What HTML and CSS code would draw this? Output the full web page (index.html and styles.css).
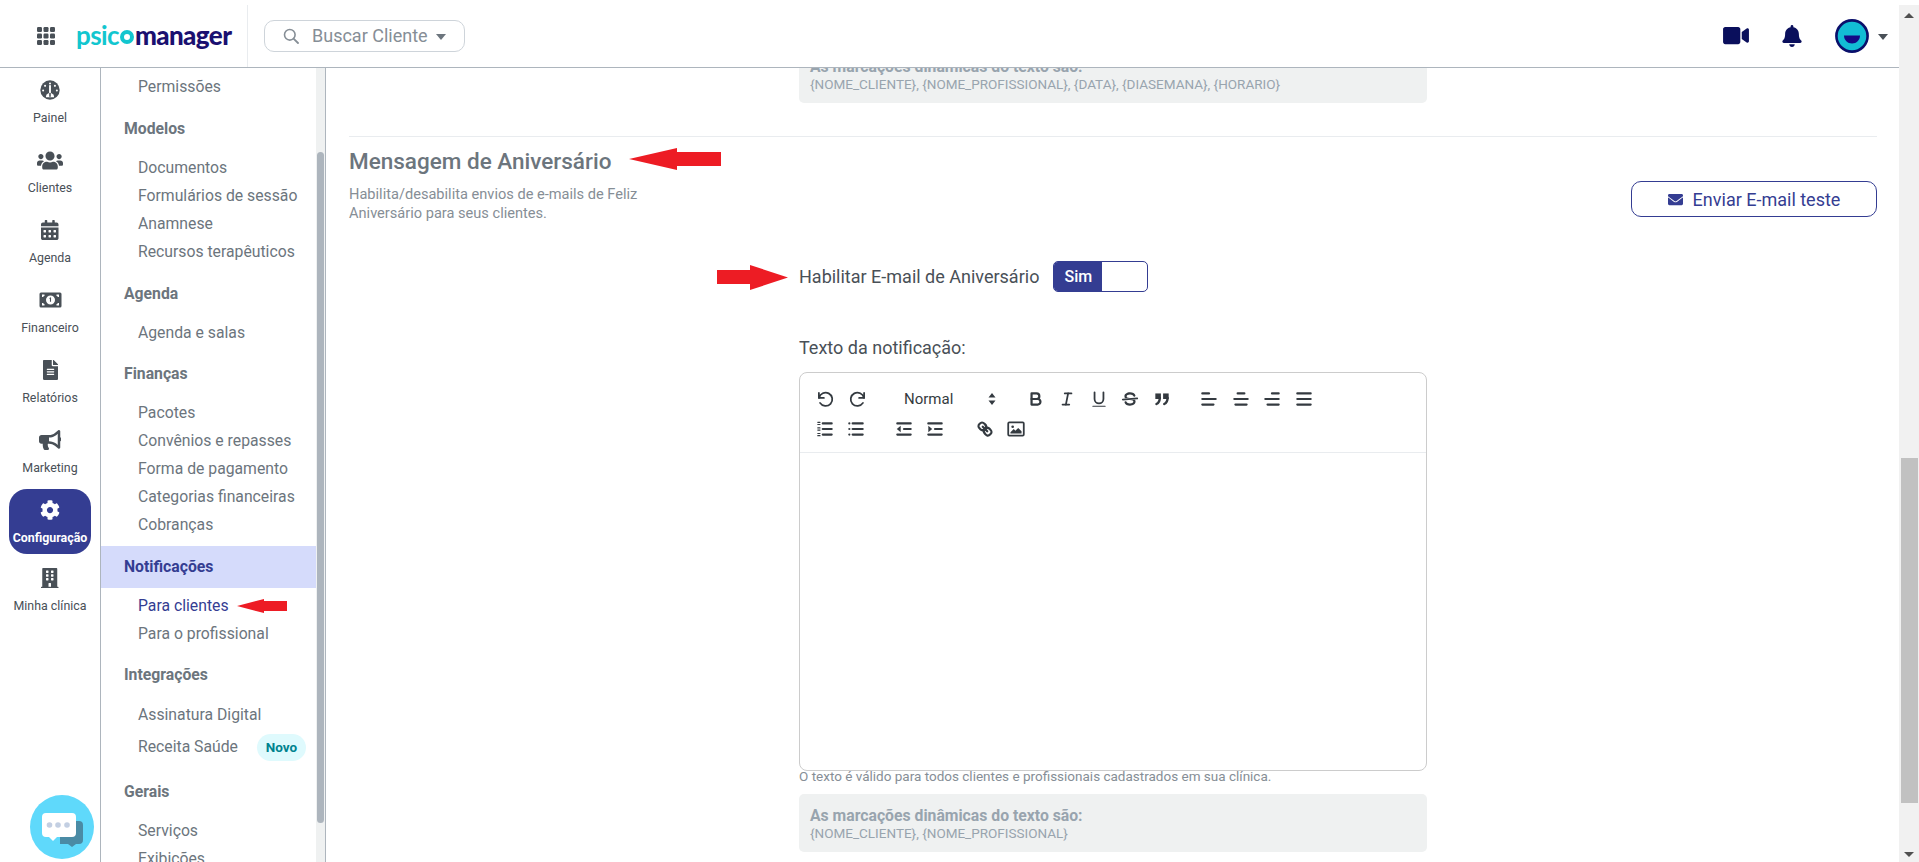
FILE: index.html
```html
<!DOCTYPE html>
<html lang="pt-BR">
<head>
<meta charset="utf-8">
<title>Psicomanager</title>
<link rel="stylesheet" href="styles.css">
</head>
<body>
<div class="page">
  <header class="topbar">
    <div class="brand">
      <svg class="grid-icon" viewBox="0 0 18 18"><g fill="#495057"><rect x="0" y="0" width="5" height="5" rx="1.2"/><rect x="6.5" y="0" width="5" height="5" rx="1.2"/><rect x="13" y="0" width="5" height="5" rx="1.2"/><rect x="0" y="6.5" width="5" height="5" rx="1.2"/><rect x="6.5" y="6.5" width="5" height="5" rx="1.2"/><rect x="13" y="6.5" width="5" height="5" rx="1.2"/><rect x="0" y="13" width="5" height="5" rx="1.2"/><rect x="6.5" y="13" width="5" height="5" rx="1.2"/><rect x="13" y="13" width="5" height="5" rx="1.2"/></g></svg>
      <div class="logo"><span class="logo-a">psic</span><span class="logo-o"></span><span class="logo-b">manager</span></div>
    </div>
    <div class="search">
      <svg class="search-icon" viewBox="0 0 16 16"><circle cx="6.8" cy="6.8" r="5.3" fill="none" stroke="#868e96" stroke-width="1.6"/><line x1="10.8" y1="10.8" x2="15" y2="15" stroke="#868e96" stroke-width="1.8" stroke-linecap="round"/></svg>
      <span class="search-text">Buscar Cliente</span>
      <span class="caret"></span>
    </div>
    <div class="top-actions">
      <svg class="ic-video" viewBox="0 0 576 512"><path fill="#0a0f5c" d="M336.2 64H47.8C21.4 64 0 85.4 0 111.8v288.4C0 426.6 21.4 448 47.8 448h288.4c26.4 0 47.8-21.4 47.8-47.8V111.8c0-26.4-21.4-47.8-47.8-47.8zm189.4 37.7L416 177.3v157.4l109.6 75.5c21.2 14.6 50.4-.3 50.4-25.8V127.5c0-25.4-29.1-40.4-50.4-25.8z"/></svg>
      <svg class="ic-bell" viewBox="0 0 448 512"><path fill="#0a0f5c" d="M224 512c35.32 0 63.97-28.65 63.97-64H160.03c0 35.35 28.65 64 63.97 64zm215.39-149.71c-19.32-20.76-55.47-51.99-55.47-154.29 0-77.7-54.48-139.9-127.94-155.16V32c0-17.67-14.32-32-31.98-32s-31.98 14.33-31.98 32v20.84C118.56 68.1 64.08 130.3 64.08 208c0 102.3-36.15 133.53-55.47 154.29-6 6.45-8.66 14.16-8.61 21.71.11 16.4 12.98 32 32.1 32h383.8c19.12 0 32-15.6 32.1-32 .05-7.55-2.61-15.27-8.61-21.71z"/></svg>
      <svg class="ic-avatar" viewBox="0 0 34 34"><circle cx="17" cy="17" r="15.6" fill="#12bcd4" stroke="#0a0f6b" stroke-width="2.6"/><path fill="#140a85" d="M9 16.5h16c0 4.6-3.6 8-8 8s-8-3.4-8-8z"/></svg>
      <span class="caret caret-dark"></span>
    </div>
  </header>

  <div class="body">
    <nav class="rail">
      <a class="rail-item">
        <span class="rail-icon"><svg class="i20" viewBox="0 0 512 512"><circle cx="256" cy="256" r="248" fill="#495057"/><g fill="#fff"><circle cx="256" cy="90" r="26"/><circle cx="130" cy="150" r="26"/><circle cx="382" cy="150" r="26"/><circle cx="80" cy="270" r="26"/><circle cx="432" cy="270" r="26"/><rect x="232" y="130" width="48" height="220" rx="20"/><path d="M150 440a106 106 0 0 1 212 0z"/></g><rect x="236" y="330" width="40" height="100" fill="#495057"/></svg></span>
        <span class="rail-label">Painel</span>
      </a>
      <a class="rail-item">
        <span class="rail-icon"><svg class="i26" viewBox="0 0 640 512"><path fill="#495057" d="M96 224c35.3 0 64-28.7 64-64s-28.7-64-64-64-64 28.7-64 64 28.7 64 64 64zm448 0c35.3 0 64-28.7 64-64s-28.7-64-64-64-64 28.7-64 64 28.7 64 64 64zm32 32h-64c-17.6 0-33.5 7.1-45.1 18.6 40.3 22.1 68.9 62 75.1 109.4h66c17.7 0 32-14.3 32-32v-32c0-35.3-28.7-64-64-64zm-256 0c61.9 0 112-50.1 112-112S381.9 32 320 32 208 82.1 208 144s50.1 112 112 112zm76.8 32h-8.3c-20.8 10-43.9 16-68.5 16s-47.6-6-68.5-16h-8.3C179.6 288 128 339.6 128 403.2V432c0 26.5 21.5 48 48 48h288c26.5 0 48-21.5 48-48v-28.8c0-63.6-51.6-115.2-115.2-115.2zm-223.7-13.4C161.5 263.1 145.6 256 128 256H64c-35.3 0-64 28.7-64 64v32c0 17.7 14.3 32 32 32h65.9c6.3-47.4 34.9-87.3 75.2-109.4z"/></svg></span>
        <span class="rail-label">Clientes</span>
      </a>
      <a class="rail-item">
        <span class="rail-icon"><svg class="i20" viewBox="0 0 448 512"><path fill="#495057" d="M0 464c0 26.5 21.5 48 48 48h352c26.5 0 48-21.5 48-48V192H0v272zm320-196c0-6.6 5.4-12 12-12h40c6.6 0 12 5.4 12 12v40c0 6.6-5.4 12-12 12h-40c-6.6 0-12-5.4-12-12v-40zm0 128c0-6.6 5.4-12 12-12h40c6.6 0 12 5.4 12 12v40c0 6.6-5.4 12-12 12h-40c-6.6 0-12-5.4-12-12v-40zM192 268c0-6.6 5.4-12 12-12h40c6.6 0 12 5.4 12 12v40c0 6.6-5.4 12-12 12h-40c-6.6 0-12-5.4-12-12v-40zm0 128c0-6.6 5.4-12 12-12h40c6.6 0 12 5.4 12 12v40c0 6.6-5.4 12-12 12h-40c-6.6 0-12-5.4-12-12v-40zM64 268c0-6.6 5.4-12 12-12h40c6.6 0 12 5.4 12 12v40c0 6.6-5.4 12-12 12H76c-6.6 0-12-5.4-12-12v-40zm0 128c0-6.6 5.4-12 12-12h40c6.6 0 12 5.4 12 12v40c0 6.6-5.4 12-12 12H76c-6.6 0-12-5.4-12-12v-40zM400 64h-48V16c0-8.8-7.2-16-16-16h-32c-8.8 0-16 7.2-16 16v48H160V16c0-8.8-7.2-16-16-16h-32c-8.8 0-16 7.2-16 16v48H48C21.5 64 0 85.5 0 112v48h448v-48c0-26.5-21.5-48-48-48z"/></svg></span>
        <span class="rail-label">Agenda</span>
      </a>
      <a class="rail-item">
        <span class="rail-icon"><svg class="i23" viewBox="0 0 46 32"><path fill="#495057" fill-rule="evenodd" d="M4 1h38a3 3 0 0 1 3 3v24a3 3 0 0 1-3 3H4a3 3 0 0 1-3-3V4a3 3 0 0 1 3-3zm19 6a9 9 0 1 0 0 18 9 9 0 0 0 0-18zM6 5v5h3V8h2V5zm29 0v3h2v2h3V5zM6 22v5h5v-3H9v-2zm31 0v2h-2v3h5v-5z"/><path fill="#495057" d="M21.5 11.5l2.6-.8v9h-2.2v-6l-1.4.4z"/></svg></span>
        <span class="rail-label">Financeiro</span>
      </a>
      <a class="rail-item">
        <span class="rail-icon"><svg class="i20" viewBox="0 0 384 512"><path fill="#495057" d="M224 136V0H24C10.7 0 0 10.7 0 24v464c0 13.3 10.7 24 24 24h336c13.3 0 24-10.7 24-24V160H248c-13.2 0-24-10.8-24-24zm64 236c0 6.6-5.4 12-12 12H108c-6.6 0-12-5.4-12-12v-8c0-6.6 5.4-12 12-12h168c6.6 0 12 5.4 12 12v8zm0-64c0 6.6-5.4 12-12 12H108c-6.6 0-12-5.4-12-12v-8c0-6.6 5.4-12 12-12h168c6.6 0 12 5.4 12 12v8zm0-72v8c0 6.6-5.4 12-12 12H108c-6.6 0-12-5.4-12-12v-8c0-6.6 5.4-12 12-12h168c6.6 0 12 5.4 12 12zm96-114.1v6.1H256V0h6.1c6.4 0 12.5 2.5 17 7l97.9 98c4.5 4.5 7 10.6 7 16.9z"/></svg></span>
        <span class="rail-label">Relatórios</span>
      </a>
      <a class="rail-item">
        <span class="rail-icon"><svg class="i20" viewBox="0 0 576 512"><path fill="#495057" d="M576 240c0-23.63-12.95-44.04-32-55.12V32.01C544 23.26 537.02 0 512 0c-7.12 0-14.19 2.38-19.98 7.02l-85.03 68.03C364.28 109.19 310.66 128 256 128H64c-35.35 0-64 28.65-64 64v96c0 35.35 28.65 64 64 64h33.7c-1.39 10.48-2.18 21.14-2.18 32 0 39.77 9.26 77.35 25.56 110.94 5.19 10.69 16.52 17.06 28.4 17.06h74.28c26.05 0 41.69-29.84 25.9-50.56-16.4-21.52-26.15-48.36-26.15-77.44 0-11.11 1.62-21.79 4.41-32H256c54.66 0 108.28 18.81 150.98 52.95l85.03 68.03a32.023 32.023 0 0 0 19.98 7.02c24.92 0 32-22.78 32-32V295.13C563.05 284.04 576 263.63 576 240zm-96 141.42l-33.05-26.44C392.95 311.78 325.12 288 256 288v-96c69.12 0 136.95-23.78 190.95-66.98L480 98.58v282.84z"/></svg></span>
        <span class="rail-label">Marketing</span>
      </a>
      <a class="rail-item active">
        <span class="rail-icon"><svg class="i20" viewBox="0 0 512 512"><path fill="#fff" d="M487.4 315.7l-42.6-24.6c4.3-23.2 4.3-47 0-70.2l42.6-24.6c4.9-2.8 7.1-8.6 5.5-14-11.1-35.6-30-67.8-54.7-94.6-3.8-4.1-10-5.1-14.8-2.3L380.8 110c-17.9-15.4-38.5-27.3-60.8-35.1V25.8c0-5.6-3.9-10.5-9.4-11.7-36.7-8.2-74.3-7.8-109.2 0-5.5 1.2-9.4 6.1-9.4 11.7V75c-22.2 7.9-42.8 19.8-60.8 35.1L88.7 85.5c-4.9-2.8-11-1.9-14.8 2.3-24.7 26.7-43.6 58.9-54.7 94.6-1.7 5.4.6 11.2 5.5 14L67.3 221c-4.3 23.2-4.3 47 0 70.2l-42.6 24.6c-4.9 2.8-7.1 8.6-5.5 14 11.1 35.6 30 67.8 54.7 94.6 3.8 4.1 10 5.1 14.8 2.3l42.6-24.6c17.9 15.4 38.5 27.3 60.8 35.1v49.2c0 5.6 3.9 10.5 9.4 11.7 36.7 8.2 74.3 7.8 109.2 0 5.5-1.2 9.4-6.1 9.4-11.7v-49.2c22.2-7.9 42.8-19.8 60.8-35.1l42.6 24.6c4.9 2.8 11 1.9 14.8-2.3 24.7-26.7 43.6-58.9 54.7-94.6 1.5-5.5-.7-11.3-5.6-14.1zM256 336c-44.1 0-80-35.9-80-80s35.9-80 80-80 80 35.9 80 80-35.9 80-80 80z"/></svg></span>
        <span class="rail-label">Configuração</span>
      </a>
      <a class="rail-item">
        <span class="rail-icon"><svg class="i20" viewBox="0 0 448 512"><path fill="#495057" d="M436 480h-20V24c0-13.255-10.745-24-24-24H56C42.745 0 32 10.745 32 24v456H12c-6.627 0-12 5.373-12 12v20h448v-20c0-6.627-5.373-12-12-12zM128 76c0-6.627 5.373-12 12-12h40c6.627 0 12 5.373 12 12v40c0 6.627-5.373 12-12 12h-40c-6.627 0-12-5.373-12-12V76zm0 96c0-6.627 5.373-12 12-12h40c6.627 0 12 5.373 12 12v40c0 6.627-5.373 12-12 12h-40c-6.627 0-12-5.373-12-12v-40zm52 148h-40c-6.627 0-12-5.373-12-12v-40c0-6.627 5.373-12 12-12h40c6.627 0 12 5.373 12 12v40c0 6.627-5.373 12-12 12zm76 160h-64v-84c0-6.627 5.373-12 12-12h40c6.627 0 12 5.373 12 12v84zm64-172c0 6.627-5.373 12-12 12h-40c-6.627 0-12-5.373-12-12v-40c0-6.627 5.373-12 12-12h40c6.627 0 12 5.373 12 12v40zm0-96c0 6.627-5.373 12-12 12h-40c-6.627 0-12-5.373-12-12v-40c0-6.627 5.373-12 12-12h40c6.627 0 12 5.373 12 12v40zm0-96c0 6.627-5.373 12-12 12h-40c-6.627 0-12-5.373-12-12V76c0-6.627 5.373-12 12-12h40c6.627 0 12 5.373 12 12v40z"/></svg></span>
        <span class="rail-label">Minha clínica</span>
      </a>
      <div class="chat">
        <svg viewBox="0 0 64 64" class="chat-svg"><path fill="#4a8ba5" d="M30 26h19a4 4 0 0 1 4 4v15a4 4 0 0 1-4 4h-3l-4 3-4-3H30z"/><path fill="#fff" d="M16 18h26a4 4 0 0 1 4 4v16a4 4 0 0 1-4 4H27l-4 4-4-4h-3a4 4 0 0 1-4-4V22a4 4 0 0 1 4-4z"/><g fill="#c3cfe2"><circle cx="19.500" cy="30" r="2.800"/><circle cx="28" cy="30" r="2.800"/><circle cx="37" cy="30" r="2.800"/></g></svg>
      </div>
    </nav>

    <aside class="subnav">
      <div class="subnav-inner">
        <ul class="sub-list first">
          <li>Permissões</li>
        </ul>
        <h4 class="sub-head">Modelos</h4>
        <ul class="sub-list">
          <li>Documentos</li>
          <li>Formulários de sessão</li>
          <li>Anamnese</li>
          <li>Recursos terapêuticos</li>
        </ul>
        <h4 class="sub-head">Agenda</h4>
        <ul class="sub-list tight">
          <li>Agenda e salas</li>
        </ul>
        <h4 class="sub-head">Finanças</h4>
        <ul class="sub-list">
          <li>Pacotes</li>
          <li>Convênios e repasses</li>
          <li>Forma de pagamento</li>
          <li>Categorias financeiras</li>
          <li>Cobranças</li>
        </ul>
        <h4 class="sub-head current">Notificações</h4>
        <ul class="sub-list tight">
          <li class="selected">Para clientes<svg class="arrow-nav" viewBox="0 0 50 14"><polygon fill="#ed1c24" points="0,7 27,0 27,2 50,2 50,12 27,12 27,14"/></svg></li>
          <li>Para o profissional</li>
        </ul>
        <h4 class="sub-head">Integrações</h4>
        <ul class="sub-list loose">
          <li>Assinatura Digital</li>
          <li class="tall">Receita Saúde<span class="badge">Novo</span></li>
        </ul>
        <h4 class="sub-head">Gerais</h4>
        <ul class="sub-list">
          <li>Serviços</li>
          <li>Exibições</li>
        </ul>
      </div>
      <div class="sub-track"><div class="sub-thumb"></div></div>
    </aside>

    <main class="main">
      <div class="form-col">
        <div class="hint">
          <strong>As marcações dinâmicas do texto são:</strong>
          <span>{NOME_CLIENTE}, {NOME_PROFISSIONAL}, {DATA}, {DIASEMANA}, {HORARIO}</span>
        </div>
      </div>
      <hr class="rule">
      <div class="section-head">
        <div>
          <div class="title-row">
            <h2 class="title">Mensagem de Aniversário</h2>
            <svg class="arrow-title" viewBox="0 0 92 22"><polygon fill="#ed1c24" points="0,11 48,0 48,4 92,4 92,18 48,18 48,22"/></svg>
          </div>
          <p class="desc">Habilita/desabilita envios de e-mails de Feliz<br>Aniversário para seus clientes.</p>
        </div>
        <button class="btn-test">
          <svg class="ic-mail" viewBox="0 0 512 512"><path fill="#343d92" d="M502.3 190.8c3.9-3.1 9.7-.2 9.7 4.700V400c0 26.500-21.500 48-48 48H48c-26.500 0-48-21.500-48-48V195.600c0-5 5.700-7.800 9.700-4.700 22.400 17.400 52.100 39.500 154.100 113.600 21.100 15.400 56.700 47.800 92.200 47.600 35.700.3 72-32.800 92.300-47.600 102-74.100 131.600-96.300 154-113.700zM256 320c23.200.4 56.600-29.200 73.400-41.400 132.700-96.300 142.800-104.700 173.400-128.700 5.800-4.500 9.200-11.500 9.200-18.900v-19c0-26.500-21.500-48-48-48H48C21.500 64 0 85.500 0 112v19c0 7.400 3.400 14.300 9.200 18.900 30.600 23.900 40.700 32.400 173.400 128.700 16.800 12.200 50.200 41.800 73.400 41.400z"/></svg>
          Enviar E-mail teste
        </button>
      </div>

      <div class="form-col">
        <div class="toggle-row">
          <svg class="arrow-label" viewBox="0 0 71 25"><polygon fill="#ed1c24" points="0,5 33,5 33,0 71,12.500 33,25 33,19 0,19"/></svg>
          <label class="field-label toggle-label">Habilitar E-mail de Aniversário</label>
          <div class="toggle"><span class="toggle-on">Sim</span><span class="toggle-off"></span></div>
        </div>
        <label class="field-label text-label">Texto da notificação:</label>
        <div class="editor">
          <div class="toolbar">
            <div class="tb-row">
              <span class="tb-group">
                <button class="tb"><svg class="fine" viewBox="0 0 18 18"><path d="M3.500 3.500V8H8"/><path d="M3.700 8a6 6 0 1 1 .8 4.500"/></svg></button>
                <button class="tb redo"><svg class="fine" viewBox="0 0 18 18"><path d="M14.500 3.500V8H10"/><path d="M14.300 8a6 6 0 1 0-.8 4.500"/></svg></button>
              </span>
              <span class="picker"><span>Normal</span><svg viewBox="0 0 12 16"><path class="solid" d="M6 2l3.500 4.500h-7zM6 14l3.500-4.500h-7z"/></svg></span>
              <span class="tb-group">
                <button class="tb"><svg viewBox="0 0 18 18"><path d="M5,4H9.500A2.500,2.500,0,0,1,12,6.500v0A2.500,2.500,0,0,1,9.500,9H5V4Z"/><path d="M5,9h5.500A2.500,2.500,0,0,1,13,11.500v0A2.500,2.500,0,0,1,10.500,14H5V9Z"/></svg></button>
                <button class="tb"><svg class="fine" viewBox="0 0 18 18"><line x1="7" x2="13" y1="4" y2="4"/><line x1="5" x2="11" y1="14" y2="14"/><line x1="8" x2="10" y1="14" y2="4"/></svg></button>
                <button class="tb"><svg class="fine" viewBox="0 0 18 18"><path d="M5,3V9a4.012,4.012,0,0,0,4,4H9a4.012,4.012,0,0,0,4-4V3"/><rect class="solid" height="1" rx="0.500" ry="0.500" width="12" x="3" y="15"/></svg></button>
                <button class="tb"><svg class="fine" viewBox="0 0 18 18"><line x1="15.500" x2="2.500" y1="8.500" y2="9.500"/><path class="solid" d="M9.007,8C6.542,7.791,6,7.519,6,6.500,6,5.792,7.283,5,9,5c1.571,0,2.765.679,2.969,1.309a1,1,0,0,0,1.900-.617C13.356,4.106,11.354,3,9,3,6.200,3,4,4.538,4,6.500a3.200,3.200,0,0,0,.5,1.843Z"/><path class="solid" d="M8.984,10C11.457,10.208,12,10.479,12,11.500c0,.708-1.283,1.500-3,1.500-1.571,0-2.765-.679-2.969-1.309a1,1,0,1,0-1.900.617C4.644,13.894,6.646,15,9,15c2.800,0,5-1.538,5-3.500a3.200,3.200,0,0,0-.5-1.843Z"/></svg></button>
                <button class="tb"><svg class="quote" viewBox="0 0 18 18"><rect class="solid" height="5" width="5" x="3" y="4"/><rect class="solid" height="5" width="5" x="10" y="4"/><path d="M7,8c0,3.500-2,5-3,5.500"/><path d="M14,8c0,3.500-2,5-3,5.500"/></svg></button>
              </span>
              <span class="tb-group gap">
                <button class="tb"><svg viewBox="0 0 18 18"><line x1="3" x2="15" y1="9" y2="9"/><line x1="3" x2="13" y1="14" y2="14"/><line x1="3" x2="9" y1="4" y2="4"/></svg></button>
                <button class="tb"><svg viewBox="0 0 18 18"><line x1="15" x2="3" y1="9" y2="9"/><line x1="14" x2="4" y1="14" y2="14"/><line x1="12" x2="6" y1="4" y2="4"/></svg></button>
                <button class="tb"><svg viewBox="0 0 18 18"><line x1="15" x2="3" y1="9" y2="9"/><line x1="15" x2="5" y1="14" y2="14"/><line x1="15" x2="9" y1="4" y2="4"/></svg></button>
                <button class="tb"><svg viewBox="0 0 18 18"><line x1="15" x2="3" y1="9" y2="9"/><line x1="15" x2="3" y1="14" y2="14"/><line x1="15" x2="3" y1="4" y2="4"/></svg></button>
              </span>
            </div>
            <div class="tb-row">
              <span class="tb-group">
                <button class="tb"><svg viewBox="0 0 18 18"><line x1="7" x2="15" y1="4" y2="4"/><line x1="7" x2="15" y1="9" y2="9"/><line x1="7" x2="15" y1="14" y2="14"/><g class="thin"><line x1="2.500" x2="4.500" y1="3" y2="3"/><line x1="2.500" x2="4.500" y1="5" y2="5"/><line x1="2.500" x2="4.500" y1="8" y2="8"/><line x1="2.500" x2="4.500" y1="10" y2="10"/><line x1="2.500" x2="4.500" y1="13" y2="13"/><line x1="2.500" x2="4.500" y1="15" y2="15"/></g></svg></button>
                <button class="tb"><svg viewBox="0 0 18 18"><line x1="6" x2="15" y1="4" y2="4"/><line x1="6" x2="15" y1="9" y2="9"/><line x1="6" x2="15" y1="14" y2="14"/><line x1="3" x2="3" y1="4" y2="4"/><line x1="3" x2="3" y1="9" y2="9"/><line x1="3" x2="3" y1="14" y2="14"/></svg></button>
              </span>
              <span class="tb-group gap">
                <button class="tb"><svg viewBox="0 0 18 18"><line x1="3" x2="15" y1="14" y2="14"/><line x1="3" x2="15" y1="4" y2="4"/><line x1="9" x2="15" y1="9" y2="9"/><polygon class="solid" points="6 6 6 12 2.500 9"/></svg></button>
                <button class="tb"><svg viewBox="0 0 18 18"><line x1="3" x2="15" y1="14" y2="14"/><line x1="3" x2="15" y1="4" y2="4"/><line x1="9" x2="15" y1="9" y2="9"/><polygon class="solid" points="3 6 3 12 6.500 9"/></svg></button>
              </span>
              <span class="tb-group gap wide">
                <button class="tb"><svg viewBox="0 0 18 18"><line x1="7" x2="11" y1="7" y2="11"/><path d="M8.900,4.577a3.476,3.476,0,0,1,.36,4.679A3.476,3.476,0,0,1,4.577,8.900C3.185,7.500,2.035,6.400,4.217,4.217S7.500,3.185,8.900,4.577Z"/><path d="M13.423,9.100a3.476,3.476,0,0,0-4.679-.36,3.476,3.476,0,0,0,.36,4.679c1.392,1.392,2.500,2.542,4.679.36S14.815,10.500,13.423,9.100Z"/></svg></button>
                <button class="tb"><svg class="fine" viewBox="0 0 18 18"><rect height="12" width="14" x="2" y="3" rx="1"/><circle class="solid" cx="6" cy="7" r="1.200"/><polygon class="solid" points="4 13 4 12 7 9 8.500 10.500 11 8 14 11 14 13"/></svg></button>
              </span>
            </div>
          </div>
        </div>
        <p class="note">O texto é válido para todos clientes e profissionais cadastrados em sua clínica.</p>
        <div class="hint">
          <strong>As marcações dinâmicas do texto são:</strong>
          <span>{NOME_CLIENTE}, {NOME_PROFISSIONAL}</span>
        </div>
      </div>
    </main>
  </div>
</div>
<div class="vscroll">
  <span class="tri-up"></span>
  <div class="vthumb"></div>
  <span class="tri-down"></span>
</div>
</body>
</html>
```
FILE: styles.css
```css
* { box-sizing: border-box; }
html { height: 862px; overflow: hidden; }
body {
  margin: 0;
  display: flex;
  height: 862px;
  overflow: hidden;
  background: #fff;
  font-family: Roboto, "Liberation Sans", sans-serif;
  color: #495057;
}
h2, h4, p, ul { margin: 0; padding: 0; }
ul { list-style: none; }

.page { width: 1899px; display: flex; flex-direction: column; height: 862px; }

/* top bar */
.topbar {
  height: 68px;
  flex: none;
  display: flex;
  align-items: center;
  border-bottom: 1px solid #adb5bd;
  background: #fff;
  position: relative;
  z-index: 2;
}
.brand {
  width: 248px;
  height: 62px;
  margin-top: 5px;
  display: flex;
  align-items: center;
  padding-left: 37px;
  border-right: 1px solid #e9ecef;
}
.grid-icon { width: 18px; height: 18px; flex: none; }
.logo {
  margin-left: 21px;
  margin-top: -2px;
  display: flex;
  align-items: center;
  font-family: Lato, Roboto, sans-serif;
  font-size: 26px;
  line-height: 30px;
  letter-spacing: -0.6px;
}
.logo-a { color: #12c6cf; font-weight: 700; }
.logo-o { width: 14px; height: 14px; border: 4px solid #12c6cf; border-radius: 50%; margin: 3px 1px 0 1px; }
.logo-b { color: #1a1070; font-weight: 900; }

.search {
  margin-left: 16px;
  margin-top: 5px;
  width: 201px;
  height: 32px;
  border: 1px solid #ced4da;
  border-radius: 10px;
  display: flex;
  align-items: center;
  padding-left: 18px;
}
.search-icon { width: 16px; height: 16px; flex: none; }
.search-text { margin-left: 13px; margin-bottom: 2px; font-size: 18px; color: #868e96; white-space: nowrap; }
.caret {
  width: 0; height: 0;
  margin-left: 8px;
  margin-top: 2px;
  border-left: 5px solid transparent;
  border-right: 5px solid transparent;
  border-top: 6px solid #6c757d;
}
.top-actions { margin-left: auto; margin-top: 4px; display: flex; align-items: center; padding-right: 11px; }
.ic-video { width: 26px; height: 23px; }
.ic-bell { width: 20px; height: 22px; margin-left: 33px; }
.ic-avatar { width: 34px; height: 34px; margin-left: 33px; }
.caret-dark { border-top-color: #495057; margin-left: 9px; }

.body { flex: 1; display: flex; min-height: 0; }

/* icon rail */
.rail {
  width: 101px;
  flex: none;
  border-right: 1px solid #adb5bd;
  padding-top: 1px;
  position: relative;
}
.rail-item {
  display: flex;
  flex-direction: column;
  align-items: center;
  height: 65px;
  margin: 0 9px 5px;
  padding-top: 9px;
  border-radius: 18px;
  color: #495057;
}
.rail-icon { height: 24px; display: flex; align-items: center; justify-content: center; }
.i20 { height: 20px; width: auto; }
.i23 { width: 23px; height: 16px; }
.i26 { width: 26px; height: 21px; }
.rail-label { margin-top: 7.5px; font-size: 12.4px; line-height: 15px; white-space: nowrap; }
.rail-item.active { background: #343d92; margin-bottom: 3px; }
.rail-item.active .rail-label { color: #fff; font-weight: 700; }
.chat {
  position: absolute;
  left: 30px;
  top: 727px;
  width: 64px;
  height: 64px;
  border-radius: 50%;
  background: #5fd9fb;
}
.chat-svg { width: 64px; height: 64px; display: block; }

/* second level nav */
.subnav { width: 225px; flex: none; display: flex; border-right: 1px solid #adb5bd; overflow: hidden; }
.subnav-inner { width: 215px; flex: none; padding-top: 5px; overflow: hidden; }
.sub-head {
  height: 42px;
  line-height: 42px;
  padding-left: 23px;
  font-size: 15.75px;
  font-weight: 700;
  color: #6c757d;
}
.sub-head.current { background: #d5dbfb; color: #343d92; }
.sub-list { padding: 4px 0 7px; }
.sub-list.first { padding-top: 0; }
.sub-list.tight { padding-bottom: 6px; }
.sub-list.loose { padding: 5px 0 6px; }
.sub-list li {
  height: 28px;
  line-height: 28px;
  padding-left: 37px;
  font-size: 15.75px;
  color: #6c757d;
  display: flex;
  align-items: center;
}
.sub-list li.selected { color: #343d92; }
.sub-list li.tall { height: 36px; }
.arrow-nav { width: 50px; height: 14px; margin-left: 8px; flex: none; }
.badge {
  margin-left: 19px;
  width: 49px;
  height: 27px;
  line-height: 27px;
  border-radius: 14px;
  text-align: center;
  background: #dffafd;
  color: #00838f;
  font-size: 13.5px;
  font-weight: 700;
}
.sub-track { width: 9px; flex: none; background: #eff1f1; padding: 84px 1px 0 1px; }
.sub-thumb { width: 7px; height: 671px; background: #adb5bd; border-radius: 4px; }

/* main content */
.main { flex: 1; min-width: 0; overflow: hidden; padding: 0 22px 0 23px; }
.form-col { margin-left: 450px; width: 628px; }
.form-col:first-child { margin-top: -23px; }
.hint {
  height: 58px;
  padding: 13px 11px;
  background: #eff1f1;
  border-radius: 5px;
  color: #98a4ae;
  display: flex;
  flex-direction: column;
}
.hint strong { font-size: 15.75px; line-height: 18px; font-weight: 700; white-space: nowrap; }
.hint span { font-size: 13.5px; line-height: 16px; white-space: nowrap; }
.rule { border: 0; border-top: 1px solid #e9ecef; margin: 33px 0 9px; }
.section-head { display: flex; justify-content: space-between; }
.title-row { display: flex; align-items: center; height: 30px; }
.title { font-size: 22.5px; line-height: 30px; font-weight: 500; color: #6c757d; white-space: nowrap; }
.arrow-title { width: 92px; height: 22px; margin-left: 18px; margin-top: -4px; }
.desc { margin-top: 9px; font-size: 14.6px; line-height: 19px; color: #868e96; white-space: nowrap; }
.btn-test {
  align-self: flex-end;
  margin-bottom: 6px;
  width: 246px;
  height: 36px;
  border: 1.5px solid #343d92;
  border-radius: 10px;
  background: #fff;
  color: #343d92;
  font: 400 18px Roboto, sans-serif;
  display: flex;
  align-items: center;
  justify-content: center;
}
.ic-mail { width: 15px; height: 15px; margin-right: 10px; }

.toggle-row { margin-top: 38px; display: flex; align-items: center; position: relative; }
.arrow-label { position: absolute; left: -82px; top: 4px; width: 71px; height: 25px; }
.field-label { font-size: 18px; line-height: 24px; color: #495057; display: block; white-space: nowrap; }
.toggle-label { padding-top: 1px; }
.toggle {
  margin-left: 14px;
  width: 95px;
  height: 31px;
  border: 1px solid #343d92;
  border-radius: 5px;
  display: flex;
  overflow: hidden;
}
.toggle-on { width: 48px; background: #343d92; color: #fff; font-size: 16px; font-weight: 500; line-height: 29px; text-align: center; }
.toggle-off { flex: 1; }
.text-label { margin-top: 44px; }

.editor {
  margin-top: 12px;
  height: 399px;
  border: 1px solid #ccc;
  border-radius: 8px;
}
.toolbar { height: 80px; border-bottom: 1px solid #e9ecef; padding: 11px 9px 8px; }
.tb-row { display: flex; height: 30px; align-items: center; }
.tb-group { display: flex; }
.tb-group.gap { margin-left: 16px; }
.tb-group.wide { margin-left: 18px; }
.tb {
  width: 31.5px;
  height: 30px;
  padding: 0;
  border: 0;
  background: none;
  display: flex;
  align-items: center;
  justify-content: center;
}
.tb.redo { padding-left: 4px; }
.tb svg { flex: none; width: 20px; height: 20px; fill: none; stroke: #343a40; stroke-width: 2; stroke-linecap: round; stroke-linejoin: round; }
.tb svg.fine { stroke-width: 1.6; }
.tb svg.quote { stroke-width: 2.2; }
.tb svg .solid { fill: #343a40; stroke: none; }
.tb svg .thin { stroke-width: 1; }
.picker {
  margin-left: 16px;
  width: 132px;
  display: flex;
  align-items: center;
  padding-left: 16px;
  font-size: 15px;
  color: #343a40;
}
.picker svg { width: 12px; height: 16px; margin-left: 33px; }
.picker svg .solid { fill: #343a40; }
.note { margin-top: -2px; font-size: 13.5px; line-height: 14px; color: #868e96; white-space: nowrap; }
.note + .hint { margin-top: 11px; }

/* page scrollbar */
.vscroll {
  width: 20px;
  height: 857px;
  margin-top: 5px;
  background: #f1f1f1;
  display: flex;
  flex-direction: column;
  align-items: center;
}
.tri-up { margin-top: 8px; width: 0; height: 0; border: 5px solid transparent; border-top: 0; border-bottom: 5px solid #505050; }
.tri-down { margin-top: 49px; width: 0; height: 0; border: 5px solid transparent; border-bottom: 0; border-top: 5px solid #505050; }
.vthumb { margin-top: 440px; width: 17px; height: 345px; background: #c1c1c1; }
```
